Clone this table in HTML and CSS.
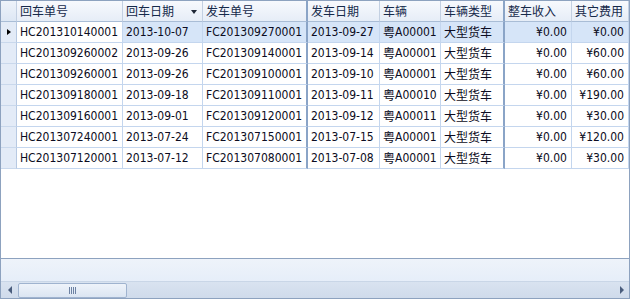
FILE: index.html
```html
<!DOCTYPE html>
<html>
<head>
<meta charset="utf-8">
<link rel="stylesheet" href="styles.css">
</head>
<body>
<div class="grid">
  <div class="row head">
    <div class="c ind"></div>
    <div class="c"><span class="cn">回车单号</span></div>
    <div class="c sorted"><span class="cn">回车日期</span><span class="sort"></span></div>
    <div class="c thick"><span class="cn">发车单号</span></div>
    <div class="c"><span class="cn">发车日期</span></div>
    <div class="c"><span class="cn">车辆</span></div>
    <div class="c thick"><span class="cn">车辆类型</span></div>
    <div class="c"><span class="cn">整车收入</span></div>
    <div class="c"><span class="cn">其它费用</span></div>
  </div>
  <div class="row sel">
    <div class="c ind"><span class="arrow"></span></div>
    <div class="c focus">HC201310140001</div>
    <div class="c">2013-10-07</div>
    <div class="c thick">FC201309270001</div>
    <div class="c">2013-09-27</div>
    <div class="c"><span class="cn">粤</span>A00001</div>
    <div class="c thick"><span class="cn">大型货车</span></div>
    <div class="c num">¥0.00</div>
    <div class="c num">¥0.00</div>
  </div>
  <div class="row">
    <div class="c ind"></div>
    <div class="c">HC201309260002</div>
    <div class="c">2013-09-26</div>
    <div class="c thick">FC201309140001</div>
    <div class="c">2013-09-14</div>
    <div class="c"><span class="cn">粤</span>A00001</div>
    <div class="c thick"><span class="cn">大型货车</span></div>
    <div class="c num">¥0.00</div>
    <div class="c num">¥60.00</div>
  </div>
  <div class="row">
    <div class="c ind"></div>
    <div class="c">HC201309260001</div>
    <div class="c">2013-09-26</div>
    <div class="c thick">FC201309100001</div>
    <div class="c">2013-09-10</div>
    <div class="c"><span class="cn">粤</span>A00001</div>
    <div class="c thick"><span class="cn">大型货车</span></div>
    <div class="c num">¥0.00</div>
    <div class="c num">¥60.00</div>
  </div>
  <div class="row">
    <div class="c ind"></div>
    <div class="c">HC201309180001</div>
    <div class="c">2013-09-18</div>
    <div class="c thick">FC201309110001</div>
    <div class="c">2013-09-11</div>
    <div class="c"><span class="cn">粤</span>A00010</div>
    <div class="c thick"><span class="cn">大型货车</span></div>
    <div class="c num">¥0.00</div>
    <div class="c num">¥190.00</div>
  </div>
  <div class="row">
    <div class="c ind"></div>
    <div class="c">HC201309160001</div>
    <div class="c">2013-09-01</div>
    <div class="c thick">FC201309120001</div>
    <div class="c">2013-09-12</div>
    <div class="c"><span class="cn">粤</span>A00011</div>
    <div class="c thick"><span class="cn">大型货车</span></div>
    <div class="c num">¥0.00</div>
    <div class="c num">¥30.00</div>
  </div>
  <div class="row">
    <div class="c ind"></div>
    <div class="c">HC201307240001</div>
    <div class="c">2013-07-24</div>
    <div class="c thick">FC201307150001</div>
    <div class="c">2013-07-15</div>
    <div class="c"><span class="cn">粤</span>A00001</div>
    <div class="c thick"><span class="cn">大型货车</span></div>
    <div class="c num">¥0.00</div>
    <div class="c num">¥120.00</div>
  </div>
  <div class="row">
    <div class="c ind"></div>
    <div class="c">HC201307120001</div>
    <div class="c">2013-07-12</div>
    <div class="c thick">FC201307080001</div>
    <div class="c">2013-07-08</div>
    <div class="c"><span class="cn">粤</span>A00001</div>
    <div class="c thick"><span class="cn">大型货车</span></div>
    <div class="c num">¥0.00</div>
    <div class="c num">¥30.00</div>
  </div>
  <div class="empty"></div>
  <div class="band"></div>
  <div class="hscroll">
    <span class="larr"></span>
    <div class="thumb"><span class="grip"></span></div>
    <span class="spacer"></span>
    <span class="rarr"></span>
  </div>
</div>
</body>
</html>
```
FILE: styles.css
```css
html, body {
  margin: 0;
  padding: 0;
  background: #ffffff;
}
.grid {
  width: 630px;
  height: 299px;
  box-sizing: border-box;
  border: 1px solid #8da2bf;
  display: flex;
  flex-direction: column;
  font-family: "DejaVu Sans Condensed", "DejaVu Sans", "Noto Sans CJK SC", sans-serif;
  font-size: 12px;
  color: #0c0c22;
  overflow: hidden;
}
.cn {
  font-family: "Noto Sans CJK SC", sans-serif;
  font-size: 12px;
}
.row {
  display: grid;
  grid-template-columns: 16px 106px 80px 105px 72px 61px 64px 67px 57px;
  height: 21px;
  flex: none;
}
.c {
  box-sizing: border-box;
  border-right: 1px solid #c4d6ee;
  border-bottom: 1px solid #c4d6ee;
  padding-left: 3px;
  display: flex;
  align-items: center;
  white-space: nowrap;
  overflow: hidden;
  line-height: 20px;
}
.c.thick {
  border-right: 2px solid #8aa4c7;
}
.c.num {
  justify-content: flex-end;
  padding-left: 0;
  padding-right: 4px;
}
.c.ind {
  background: #e3ebf7;
  border-right-color: #b7c9e2;
  border-bottom-color: #c9d8ec;
  padding: 0;
  justify-content: center;
}
.head .c {
  background: linear-gradient(#f7f9fd, #e6edf7);
  border-right-color: #c3d0e2;
  border-bottom-color: #a9bdd6;
  color: #15294a;
}
.head .c.thick {
  border-right-color: #8aa4c7;
}
.head .c.ind {
  background: linear-gradient(#eef3fa, #dde7f4);
}
.sorted {
  justify-content: space-between;
  padding-right: 5px;
}
.sort {
  width: 0;
  height: 0;
  border-left: 3.5px solid transparent;
  border-right: 3.5px solid transparent;
  border-top: 4px solid #1e2636;
  margin-top: 1px;
}
.sel .c {
  background: #d6e5f8;
}
.sel .c.focus {
  background: #ffffff;
}
.sel .c.ind {
  background: #e3ebf7;
}
.arrow {
  width: 0;
  height: 0;
  border-top: 3.5px solid transparent;
  border-bottom: 3.5px solid transparent;
  border-left: 4px solid #000000;
  margin-left: 1px;
}
.empty {
  flex: 1;
  background: #ffffff;
  border-bottom: 1px solid #8da2bf;
}
.band {
  height: 22px;
  flex: none;
  background: linear-gradient(#eef3fa, #e6eef9);
}
.hscroll {
  height: 17px;
  flex: none;
  background: linear-gradient(#d9e3f0, #cfdbeb);
  border-top: 1px solid #c9d6e7;
  box-sizing: border-box;
  display: flex;
  align-items: center;
}
.larr {
  width: 0;
  height: 0;
  border-top: 4px solid transparent;
  border-bottom: 4px solid transparent;
  border-right: 4px solid #4a5d7d;
  margin-left: 7px;
  margin-right: 6px;
}
.rarr {
  width: 0;
  height: 0;
  border-top: 4px solid transparent;
  border-bottom: 4px solid transparent;
  border-left: 4px solid #4a5d7d;
  margin-right: 5px;
}
.spacer {
  flex: 1;
}
.thumb {
  width: 109px;
  height: 15px;
  box-sizing: border-box;
  border: 1px solid #9fb3cf;
  border-radius: 2px;
  background: linear-gradient(#eef3fa, #dbe5f2);
  display: flex;
  align-items: center;
  justify-content: center;
}
.grip {
  width: 7px;
  height: 7px;
  background: repeating-linear-gradient(90deg, #6d82a3 0 1px, transparent 1px 2px);
}
```
